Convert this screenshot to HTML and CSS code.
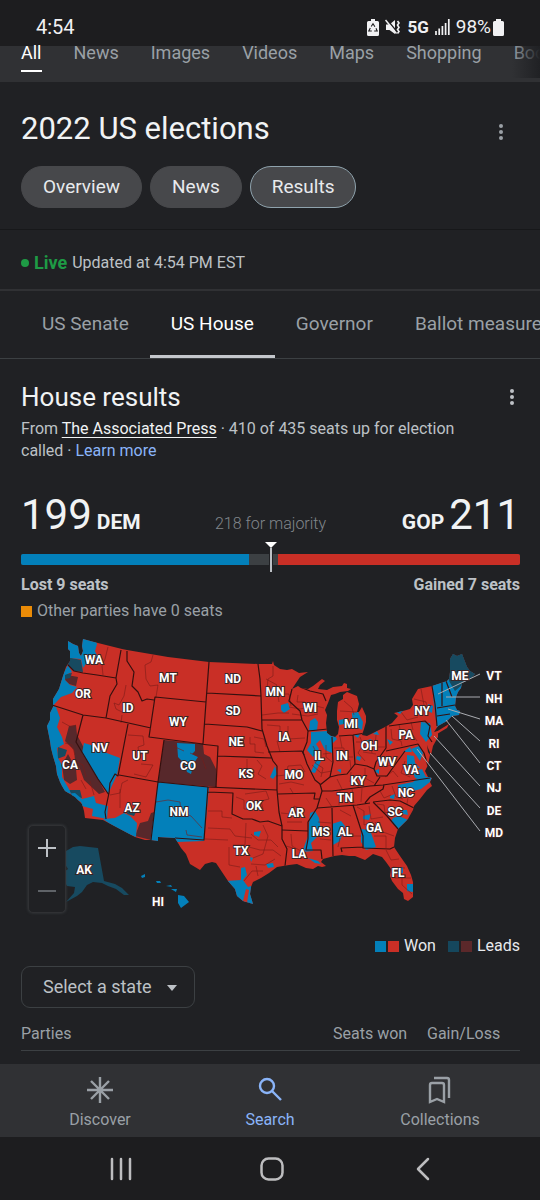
FILE: index.html
```html
<!DOCTYPE html>
<html lang="en">
<head>
    <meta charset="UTF-8">
    <meta name="viewport" content="width=device-width, initial-scale=1.0">
    <link rel="stylesheet" href="styles.css">
    <title>2022 US elections</title>
</head>
<body>
    <div class="status-bar">
        <span class="clock">4:54</span>
        <div class="status-icons">
            <svg width="12" height="17" viewBox="0 0 12 17"><path fill="#f1f1f3" d="M4 0h4v2h2.500q1.500 0 1.500 1.500v12q0 1.500-1.500 1.500h-9q-1.500 0-1.500-1.500v-12q0-1.500 1.500-1.500h2.500z"/><path d="M4.200 7.500l1.800-2.700 1.900 2.900M9 9.300l1.200 2.700h-3M4.800 12h-3l1.500-3" fill="none" stroke="#1d1d1f" stroke-width="1.100"/></svg>
            <svg width="16" height="17" viewBox="0 0 16 17"><path fill="#f1f1f3" d="M1 5.500h3.500L10 1v14l-5.500-4H1z"/><path d="M1.500 0l11 13.500" stroke="#1d1d1f" stroke-width="1.500"/><path d="M.5 1l11 13.500" fill="none" stroke="#f1f1f3" stroke-width="1.500"/><path d="M12.500 2l1.500 2-1.500 2 1.500 2.500-1.500 2 1.500 2-1.500 2" fill="none" stroke="#f1f1f3" stroke-width="1.600"/></svg>
            <b>5G</b>
            <svg width="15" height="16" viewBox="0 0 15 16"><path d="M1 12v4M4.200 9.500v6.500M7.400 7v9M10.600 4v12M13.800 0v16" stroke="#f1f1f3" stroke-width="1.700"/></svg>
            <span class="percent">98%</span>
            <svg width="11" height="17" viewBox="0 0 11 17"><path fill="#f1f1f3" d="M3 0h5v2h1.500q1.500 0 1.500 1.500v12q0 1.500-1.500 1.500h-8q-1.500 0-1.500-1.500v-12q0-1.500 1.500-1.500h1.500z"/></svg>
        </div>
    </div>

    <nav class="search-nav">
        <a href="#" class="current">All</a>
        <a href="#">News</a>
        <a href="#">Images</a>
        <a href="#">Videos</a>
        <a href="#">Maps</a>
        <a href="#">Shopping</a>
        <a href="#">Books</a>
    </nav>

    <main>
        <header class="page-header">
            <div class="title-row">
                <h1>2022 US elections</h1>
                <button class="more more-inset" aria-label="More options">
                    <svg width="6" height="18" viewBox="0 0 6 18"><circle cx="3" cy="3" r="2"/><circle cx="3" cy="9" r="2"/><circle cx="3" cy="15" r="2"/></svg>
                </button>
            </div>
            <div class="chips">
                <button class="chip">Overview</button>
                <button class="chip">News</button>
                <button class="chip selected">Results</button>
            </div>
        </header>

        <p class="live"><span class="live-dot"></span><b>Live</b> <span>Updated at 4:54 PM EST</span></p>

        <nav class="race-tabs">
            <a href="#">US Senate</a>
            <a href="#" class="current">US House</a>
            <a href="#">Governor</a>
            <a href="#">Ballot measures</a>
        </nav>

        <section class="results">
            <div class="title-row">
                <h2>House results</h2>
                <button class="more" aria-label="More about these results">
                    <svg width="6" height="18" viewBox="0 0 6 18"><circle cx="3" cy="3" r="2"/><circle cx="3" cy="9" r="2"/><circle cx="3" cy="15" r="2"/></svg>
                </button>
            </div>
            <p class="source">From <a href="#" class="press">The Associated Press</a> · 410 of 435 seats up for election called · <a href="#">Learn more</a></p>

            <div class="score">
                <div class="party"><span class="count">199</span><b>DEM</b></div>
                <span class="majority">218 for majority</span>
                <div class="party party-right"><b>GOP</b><span class="count">211</span></div>
            </div>
            <div class="seat-bar">
                <div class="dem" style="width: 45.7%"></div>
                <div class="gop" style="width: 48.5%"></div>
                <svg class="marker" width="14" height="30" viewBox="0 0 14 30"><path d="M1 0h12L7 6z" fill="#fff"/><path d="M7 7v23" stroke="#202124" stroke-width="4"/><path d="M7 6v24" stroke="#bdc1c6" stroke-width="2"/></svg>
            </div>
            <div class="change"><b>Lost 9 seats</b><b>Gained 7 seats</b></div>
            <p class="others"><span class="swatch orange"></span>Other parties have 0 seats</p>
        </section>

        <div class="map">
            <svg class="us-map" viewBox="0 0 540 290" role="img" aria-label="House results by state">
                <defs>
                    <path id="usa" d="M68 12L73 15L78 17L79 24L81 27L83 22L82 17L83 10L94 13L122 20L127 21L168 28L209 33L258 35L272 35L273 32L274 36L280 40L287 41L292 40L299 44L308 43L300 48L292 60L298 57L301 59L308 60L313 57L322 50L325 52L320 56L318 60L327 61L333 58L342 57L344 54L347 55L347 59L351 60L348 62L340 63L335 65L331 66L328 74L325 81L327 86L326 94L327 104L331 107L335 108L338 105L339 98L337 91L337 82L338 73L343 70L343 66L347 63L352 65L357 67L359 75L357 83L359 83L362 78L366 87L366 93L364 100L362 106L367 107L375 103L385 98L392 94L398 87L394 84L403 82L410 80L413 76L412 70L418 60L432 57L447 52L449 50L450 43L450 30L453 25L457 27L462 25L467 38L470 42L475 45L469 51L462 54L461 59L458 63L456 68L455 77L457 81L460 82L459 86L452 87L447 92L438 97L434 103L438 102L438 108L433 117L431 126L428 119L427 116L428 123L430 126L428 136L425 142L428 148L432 149L430 153L432 157L427 161L420 170L414 177L413 181L408 190L398 200L395 209L394 218L400 227L407 237L411 246L413 253L413 268L408 272L404 270L403 264L398 260L392 252L390 247L391 240L386 233L382 228L373 225L365 231L355 227L349 227L342 226L334 227L323 230L321 233L326 237L322 238L318 237L313 240L306 239L297 235L289 236L277 238L269 244L261 249L253 253L251 258L250 265L253 275L243 272L237 267L235 260L228 252L220 240L216 234L212 233L205 235L200 241L190 235L186 225L181 219L175 209L158 208L158 212L151 211L145 211L135 208L103 191L85 189L84 182L82 175L75 168L65 162L62 157L60 153L57 145L56 137L53 127L51 119L50 112L47 97L50 91L50 84L53 78L53 70L59 60L63 47L66 38L70 32L70 22L68 20Z"/>
                    <clipPath id="land"><use href="#usa"/></clipPath>
                </defs>
                <use href="#usa" class="won-gop"/>
                <g clip-path="url(#land)">
                    <!-- leading, not called -->
                    <path class="lead-gop" d="M67 46L78 48L76 57L69 55L65 51ZM69 97L76 96L77 106L84 119L98 150L105 163L99 165L84 151L80 140L75 132L74 121L65 112ZM62 136L68 125L76 140L77 151L70 155L64 151ZM164 111L203 115L204 125L210 128L216 140L216 158L158 153ZM151 184L148 192L140 194L135 207L151 211L158 182Z"/>
                    <path class="lead-dem" d="M67 28L81 31L83 43L74 42L68 36ZM65 45L72 44L70 49L65 50ZM58 118L67 121L65 127L57 130ZM69 161L80 161L82 169L72 167ZM128 181L136 183L134 187L127 185ZM450 20L464 20L478 45L462 56L455 62L449 52Z"/>
                    <!-- called for Democrats -->
                    <path class="won-dem" d="M64 8L95 10L97 15L95 22L98 29L90 29L83 39L81 30L70 29ZM68 36L72 43L65 46L65 51L70 56L77 58L72 64L61 68L50 80L45 78Z"/>
                    <path class="won-dem" d="M45 75L56 78L60 89L57 98L62 108L64 115L57 119L58 129L62 136L62 148L69 160L73 169L81 173L82 177L93 180L92 187L107 190L108 177L96 174L94 167L82 170L75 164L65 165L50 145L40 90Z"/>
                    <path class="won-dem" d="M84 114L94 117L104 123L120 129L117 146L108 165L98 150L82 124ZM103 190L115 189L124 184L130 187L137 194L136 208L120 202Z"/>
                    <path class="won-dem" d="M158 153L209 158L204 212L150 214ZM177 114L195 115L195 122L192 125L198 128L194 134L191 145L187 143L184 134L178 128Z"/>
                    <path class="won-dem" d="M281 76L288 74L290 80L284 84L281 81ZM275 137L277 145L273 150L270 148ZM310 92L315 89L318 93L317 101L309 101ZM311 103L327 102L332 108L332 124L325 121L320 111L316 115L319 120L313 128L307 121L311 114ZM316 131L321 132L315 144L311 143ZM352 84L358 83L363 93L362 101L357 98L353 98ZM339 91L344 90L344 95L339 96ZM337 141L341 140L341 144ZM354 106L360 105L358 109ZM357 127L361 128L360 132L356 130ZM365 112L371 110L373 114L369 117ZM373 105L377 102L379 106ZM327 108L334 106L337 110L333 114Z"/>
                    <path class="won-dem" d="M310 184L315 182L319 189L321 202L316 209L311 214L313 222L302 223L308 207ZM332 195L341 192L345 197L340 212L333 216ZM361 200L370 201L376 218L366 221L361 213ZM308 229L318 232L321 235L315 234ZM363 187L371 185L369 191L363 190ZM393 189L399 187L408 191L398 200L391 193ZM401 181L407 181L408 186L403 185Z"/>
                    <path class="won-dem" d="M398 156L413 153L418 148L432 148L430 153L421 160L413 162L398 162ZM390 167L395 165L394 170L390 169ZM407 126L414 127L415 134L420 139L413 139L407 137ZM411 120L419 117L423 124L420 132L416 126ZM413 143L422 140L426 148L415 149ZM374 142L379 140L379 145Z"/>
                    <path class="won-dem" d="M432 57L449 48L462 54L465 80L460 92L437 99L434 76ZM428 75L433 77L432 84L428 82ZM421 93L430 94L432 106L426 113L420 105ZM395 82L404 81L400 85ZM387 110L393 113L390 116ZM403 123L412 123L410 118ZM416 81L419 80L419 84Z"/>
                    <path class="won-dem" d="M241 239L245 238L247 246L243 251L248 258L251 257L254 276L234 272L226 252L241 251ZM254 203L261 202L259 208L254 206ZM250 228L253 229L251 233ZM266 235L273 234L274 238L268 239ZM398 239L403 238L403 244L399 245ZM407 255L413 255L413 263L407 262Z"/>
                    <path class="won-gop" d="M246 260L249 261L247 274L243 272Z"/>
                    <path class="lead-dem" d="M449 24L464 20L478 45L462 56L455 62L449 52Z"/>
                    <!-- district lines -->
                    <path class="districts" d="M108 18L105 30L102 37L103 46M153 26L151 33L145 36L146 50L150 57L158 56L156 68M126 56L124 67L119 76L114 74L116 80L122 83M122 86L121 94M128 106L143 107L144 116L138 118L139 125L148 124M141 135L153 136L146 148L134 145M81 151L86 160M110 166L120 164L122 154L128 151M120 160L120 179M156 173L168 171L180 173L181 183L191 187L202 199M186 201L187 206L202 208M273 37L273 47L268 50L267 60M266 50L277 56L273 63L278 67L279 73M262 86L278 84L289 84M273 65L289 65L291 77M298 66L297 73L305 73L306 85M289 78L300 80L316 77L324 79M292 85L308 87L318 85M267 96L280 97L280 107L288 107L288 97M283 111L277 112L280 123M288 110L305 109M250 108L250 115L255 115L255 123L264 124M254 108L264 110L266 118"/>
                    <path class="districts" d="M247 130L247 140L253 141L252 150M257 131L262 137L258 145L266 150M276 147L286 146L288 137L301 136L305 143M279 155L291 153L304 156M290 159L293 164M208 182L222 182L222 188L232 189M205 210L228 211M208 199L230 200L235 207L252 209M246 194L245 216L233 216M251 205L258 211L271 211L278 218M263 196L268 207L263 225L253 229M229 218L229 236L240 238M249 218L260 221L273 221L281 227M251 235L265 236L275 230M244 252L252 242L263 242M258 247L256 237M245 165L266 162L269 170L261 172L263 180M236 168L244 171L244 180L253 181M281 184L291 185L294 177L305 181M287 193L302 193M291 205L292 217L301 222M286 217L293 219M292 229L304 229M313 117L319 129L315 134L323 139L321 148M326 116L326 128L332 133M323 125L331 124M312 136L321 144L332 142M334 119L344 119L344 128L353 128M337 132L350 131L351 141M340 108L342 119M340 82L357 83M344 72L352 79L354 86"/>
                    <path class="districts" d="M356 113L369 113L372 124M360 108L363 116L358 124L365 132M376 106L375 118L385 118M363 123L376 125M337 150L342 160M351 143L350 153L359 158M365 139L365 149L374 154M326 169L332 178M340 161L339 176M352 160L354 174M362 159L361 173M318 193L331 194M320 210L331 211M340 181L351 187M340 207L361 207M338 218L340 209M357 178L364 182L364 196L373 193M369 177L371 190L383 188M375 193L383 203L394 207M374 207L386 207L386 219M377 175L384 176L385 184L393 181M390 178L400 179M380 162L384 169L391 166M392 157L396 168L403 170M409 162L407 175M385 148L393 142L398 148M405 132L401 144L410 148M391 100L392 110L401 112L402 117M399 95L401 106L413 106L417 112M411 93L413 101M401 83L407 91L418 88M414 70L426 73L428 83M421 60L424 76L416 84M381 130L386 137L394 136M386 221L391 231L399 230M393 238L405 239M395 249L411 249M402 247L402 256L412 265M173 117L184 122M190 124L202 129L206 140M62 93L71 98L76 96M65 114L72 116L75 126M77 133L83 136L86 148M90 152L94 166"/>
                    <path class="borders" d="M68 36L74 42L83 44L97 46L116 49M121 21L116 49L117 55L110 67L106 89M52 76L83 86L106 89L151 99M127 22L127 32L134 43L132 57L138 63L142 72L147 70L154 71M209 33L206 73L203 115M206 73L155 68L149 108L203 115M164 111L158 153L151 211M128 95L118 147L115 145L110 154L109 164L105 183L106 190M119 146L158 153L208 158L277 161M83 86L76 113L98 150L109 166M207 64L261 67M258 35L260 50L261 67L262 100L267 117L273 132L277 137L277 161L279 183L282 197L282 210L287 220L285 237M205 95L247 98L262 102M200 115L218 117L216 158M217 127L272 129M262 91L302 91M292 60L289 72L300 82L302 91L308 102L307 113L303 123L307 135L310 141L315 151L320 155L322 162L317 179L308 193L308 210L306 221L321 221L322 230"/>
                    <path class="borders" d="M308 102L328 100M268 123L302 122L304 126M300 58L310 62L323 65L326 72M332 108L333 133L330 148L320 156M330 148L338 146L347 145L355 135L367 137L374 140L376 133L386 119L386 97M353 106L355 135M339 107L353 106L365 104M374 140L377 147L387 147L397 133L405 122M386 122L418 115L424 124L428 137M389 97L425 92L430 97L428 107L432 113M432 57L435 75L437 97M442 53L442 77M437 79L455 76M437 87L450 85M446 52L452 68M322 162L332 162L370 157L383 156L430 149M317 179L357 176L370 174M365 174L370 168L383 160L384 156M374 157L380 148M373 173L390 171L400 172L414 179M373 173L387 187L398 200M353 176L363 207L363 219L390 220L394 218M332 179L333 227M342 223L341 219L363 218M282 201L308 202M278 165L315 164L314 170L319 170M208 158L204 211L175 209M208 163L233 164L232 185L243 190L252 190L260 193L268 192L282 197"/>
                </g>
                <path class="won-gop" d="M436 103L449 95L447 99L437 105Z"/>
                <path class="lead-dem" d="M58 224L66 222L73 218L80 217L98 219L104 252L115 255L122 259L129 266L124 266L116 260L108 257L102 254L93 253L87 256L82 263L77 267L66 273L74 264L75 258L67 257L61 245L68 240Z"/>
                <path class="won-dem" d="M141 247L145 245L145 248L142 249ZM156 252L160 252L161 254L157 254ZM166 257L171 256L172 258ZM171 260L177 260L176 263ZM178 266L184 267L189 273L181 279L178 274Z"/>
                <path class="leaders" d="M480 45L438 65M480 68L446 68M480 90L448 80M480 112L452 87M480 134L446 91M480 157L434 107M480 179L430 124M480 202L417 120"/>
                <g class="state-names">
                    <text x="94" y="35">WA</text><text x="168" y="53">MT</text><text x="83" y="69">OR</text>
                    <text x="128" y="83">ID</text><text x="178" y="97">WY</text><text x="100" y="123">NV</text>
                    <text x="140" y="131">UT</text><text x="70" y="140">CA</text><text x="188" y="141">CO</text>
                    <text x="132" y="183">AZ</text><text x="179" y="187">NM</text><text x="233" y="54">ND</text>
                    <text x="233" y="86">SD</text><text x="236" y="117">NE</text><text x="246" y="149">KS</text>
                    <text x="275" y="67">MN</text><text x="284" y="112">IA</text><text x="310" y="83">WI</text>
                    <text x="351" y="99">MI</text><text x="319" y="131">IL</text><text x="342" y="131">IN</text>
                    <text x="369" y="121">OH</text><text x="294" y="150">MO</text><text x="254" y="181">OK</text>
                    <text x="296" y="188">AR</text><text x="241" y="226">TX</text><text x="299" y="229">LA</text>
                    <text x="321" y="207">MS</text><text x="345" y="207">AL</text><text x="345" y="173">TN</text>
                    <text x="358" y="156">KY</text><text x="374" y="203">GA</text><text x="395" y="187">SC</text>
                    <text x="406" y="168">NC</text><text x="411" y="145">VA</text><text x="387" y="137">WV</text>
                    <text x="406" y="110">PA</text><text x="422" y="86">NY</text><text x="398" y="248">FL</text>
                    <text x="460" y="51">ME</text><text x="494" y="51">VT</text><text x="494" y="74">NH</text>
                    <text x="494" y="96">MA</text><text x="494" y="119">RI</text><text x="494" y="141">CT</text>
                    <text x="494" y="163">NJ</text><text x="494" y="186">DE</text><text x="494" y="208">MD</text>
                    <text x="84" y="245">AK</text><text x="158" y="277">HI</text>
                </g>
            </svg>
            <div class="zoom">
                <button aria-label="Zoom in"><svg width="20" height="20" viewBox="0 0 20 20"><path d="M10 1v18M1 10h18" stroke="#bdc1c6" stroke-width="2"/></svg></button>
                <button aria-label="Zoom out"><svg width="20" height="20" viewBox="0 0 20 20"><path d="M1 10h18" stroke="#5f6368" stroke-width="2"/></svg></button>
            </div>
        </div>

        <section class="breakdown">
            <div class="legend">
                <span class="swatch blue"></span><span class="swatch red"></span><span>Won</span>
                <span class="swatch blue-lead"></span><span class="swatch red-lead"></span><span>Leads</span>
            </div>
            <div class="state-picker">
                <select aria-label="Select a state">
                    <option>Select a state</option>
                    <option>Alabama</option>
                    <option>Alaska</option>
                    <option>Arizona</option>
                </select>
                <svg class="caret" width="10" height="6" viewBox="0 0 10 6"><path d="M0 0h10L5 6z" fill="#bdc1c6"/></svg>
            </div>
            <table class="parties">
                <thead>
                    <tr><th>Parties</th><th class="seats">Seats won</th><th class="gain">Gain/Loss</th></tr>
                </thead>
            </table>
        </section>
    </main>

    <nav class="app-nav">
        <a href="#">
            <svg width="28" height="28" viewBox="0 0 28 28"><path d="M14 1v26M1 14h26M5 5l18 18M23 5L5 23"/></svg>
            Discover
        </a>
        <a href="#" class="current">
            <svg width="28" height="28" viewBox="0 0 28 28"><circle cx="11" cy="10" r="7"/><path d="M16 15l9 9"/></svg>
            Search
        </a>
        <a href="#">
            <svg width="28" height="28" viewBox="0 0 28 28"><path d="M4 26V9q0-2 2-2h10q2 0 2 2v17l-7-3zM8 2h13q2 0 2 2v18"/></svg>
            Collections
        </a>
    </nav>
    <div class="system-nav">
        <button aria-label="Recent apps"><svg width="24" height="24" viewBox="0 0 24 24"><path d="M3 2v20M12 2v20M21 2v20"/></svg></button>
        <button aria-label="Home"><svg width="24" height="24" viewBox="0 0 24 24"><rect x="1.500" y="1.500" width="21" height="21" rx="7"/></svg></button>
        <button aria-label="Back"><svg width="24" height="24" viewBox="0 0 24 24"><path d="M17 2L7 12l10 10"/></svg></button>
    </div>
</body>
</html>
```
FILE: styles.css
```css
* {
    margin: 0;
    padding: 0;
    box-sizing: border-box;
}

body {
    font-family: Roboto, "Liberation Sans", sans-serif;
    font-size: 16px;
    line-height: 22px;
    background-color: #202124;
    color: #bdc1c6;
    display: flex;
    flex-direction: column;
    min-height: 100vh;
    overflow-x: hidden;
}

a {
    color: inherit;
    text-decoration: none;
}

button,
select {
    font: inherit;
    color: inherit;
    background: none;
    border: none;
    cursor: pointer;
}

svg {
    display: block;
    flex-shrink: 0;
}

/* Phone status bar */
.status-bar {
    height: 46px;
    padding: 8px 36px 0;
    display: flex;
    align-items: center;
    justify-content: space-between;
    background-color: #1d1d1f;
    color: #f1f1f3;
    font-size: 20px;
}

.status-icons {
    display: flex;
    align-items: center;
    gap: 6px;
}

.status-icons b {
    font-size: 17px;
}

.percent {
    font-size: 19px;
    margin-right: -4px;
}

/* Search type tabs */
.search-nav {
    position: relative;
    height: 36px;
    padding: 0 21px;
    display: flex;
    gap: 32px;
    overflow-x: clip;
    white-space: nowrap;
    background-color: #303134;
    color: #9aa0a6;
    font-size: 18px;
    line-height: 14px;
}

.search-nav a {
    height: 26px;
}

.search-nav .current {
    color: #fff;
    border-bottom: 2px solid #fff;
}

.search-nav::after {
    content: "";
    position: absolute;
    top: 0;
    right: 0;
    width: 28px;
    height: 32px;
    background: linear-gradient(to right, rgba(32, 33, 36, 0), #202124);
}

/* Title and chips */
.page-header {
    padding: 29px 21px 21px;
    border-bottom: 1px solid #17181a;
}

.title-row {
    display: flex;
    align-items: center;
    justify-content: space-between;
}

h1,
h2 {
    font-weight: 400;
    color: #f1f3f4;
}

h1 {
    font-size: 31px;
    line-height: 36px;
}

h2 {
    font-size: 26px;
    line-height: 32px;
}

.more {
    width: 16px;
    display: flex;
    justify-content: center;
    fill: #bdc1c6;
}

.more-inset {
    margin-right: 10px;
    padding-top: 6px;
    fill: #9aa0a6;
}

.chips {
    display: flex;
    gap: 8px;
    margin-top: 19px;
}

.chip {
    height: 42px;
    padding: 0 21px;
    border: 1px solid #47484b;
    border-radius: 21px;
    background-color: #47484b;
    color: #e8eaed;
    font-size: 19px;
}

.chip.selected {
    border-color: #8fa3ad;
}

.live {
    display: flex;
    align-items: center;
    gap: 5px;
    padding: 22px 21px 15px;
    border-bottom: 2px solid #303134;
}

.live b {
    color: #1e9b45;
    font-size: 18px;
}

.live-dot {
    width: 8px;
    height: 8px;
    border-radius: 50%;
    background-color: #1e9b45;
}

/* Race tabs */
.race-tabs {
    display: flex;
    height: 68px;
    padding-left: 21px;
    overflow-x: clip;
    white-space: nowrap;
    border-bottom: 1px solid #3c4043;
    color: #9aa0a6;
    font-size: 19px;
    line-height: 66px;
}

.race-tabs a {
    padding: 0 21px;
}

.race-tabs .current {
    color: #fff;
    border-bottom: 3px solid #c4c7cc;
}

/* Seat totals */
.results {
    padding: 22px 20px 0 21px;
}

.source {
    margin-top: 5px;
    padding-right: 32px;
}

.source a {
    color: #8ab4f8;
}

.source .press {
    color: #f1f3f4;
    text-decoration: underline;
    text-underline-offset: 3px;
}

.score {
    display: grid;
    grid-template-columns: 1fr auto 1fr;
    align-items: baseline;
    margin-top: 29px;
    line-height: 48px;
    color: #f1f3f4;
}

.party {
    display: flex;
    align-items: baseline;
    gap: 5px;
}

.party-right {
    justify-content: flex-end;
}

.party b {
    font-size: 21px;
}

.count {
    font-size: 42px;
}

.majority {
    color: #80868b;
    font-weight: 300;
}

.seat-bar {
    position: relative;
    display: flex;
    justify-content: space-between;
    height: 11px;
    margin-top: 6px;
    border-radius: 2px;
    background-color: #3c4043;
}

.dem {
    background-color: #0380ba;
    border-radius: 2px 0 0 2px;
}

.gop {
    background-color: #c92f26;
    border-radius: 0 2px 2px 0;
}

.marker {
    position: absolute;
    top: -12px;
    left: 50%;
    transform: translateX(-50%);
}

.change {
    display: flex;
    justify-content: space-between;
    margin-top: 9px;
}

.others {
    display: flex;
    align-items: center;
    gap: 5px;
    margin-top: 4px;
    color: #9aa0a6;
}

.swatch {
    width: 11px;
    height: 11px;
}

.orange { background-color: #ea8b07; }
.blue { background-color: #0380ba; }
.red { background-color: #c92f26; }
.blue-lead { background-color: #15475d; }
.red-lead { background-color: #5b282a; }

/* Map */
.map {
    position: relative;
    margin-top: 7px;
}

.us-map {
    width: 100%;
    height: auto;
}

.won-dem { fill: #0380ba; }
.won-gop { fill: #c92f26; }
.lead-dem { fill: #174a60; }
.lead-gop { fill: #57282b; }

.borders {
    fill: none;
    stroke: #35100f;
    stroke-width: 1.2;
    stroke-linejoin: round;
}

.districts {
    fill: none;
    stroke: #7a1d1a;
    stroke-width: 0.6;
}

.leaders {
    stroke: #a9abb0;
    stroke-width: 1;
}

.state-names {
    fill: #fff;
    stroke: #3a2526;
    stroke-width: 2;
    paint-order: stroke;
    font-size: 12px;
    font-weight: 700;
    text-anchor: middle;
}

.zoom {
    position: absolute;
    left: 28px;
    bottom: 6px;
    width: 38px;
    border: 1px solid #303134;
    border-radius: 5px;
    background-color: #202124;
    box-shadow: 0 0 3px #3c4043;
}

.zoom button {
    display: flex;
    align-items: center;
    justify-content: center;
    width: 100%;
    height: 43px;
}

/* Legend, state picker and table */
.breakdown {
    padding: 16px 20px 11px 21px;
}

.legend {
    display: flex;
    align-items: center;
    justify-content: flex-end;
    gap: 2px;
    color: #e8eaed;
}

.legend span:not(.swatch) {
    margin-left: 3px;
}

.legend .blue-lead {
    margin-left: 10px;
}

.state-picker {
    position: relative;
    width: max-content;
    margin-top: 9px;
}

.state-picker select {
    appearance: none;
    height: 42px;
    padding: 0 42px 0 21px;
    border: 1px solid #3c4043;
    border-radius: 9px;
    font-size: 18px;
}

.caret {
    position: absolute;
    right: 18px;
    top: 19px;
    pointer-events: none;
}

.parties {
    width: 100%;
    margin-top: 15px;
    border-collapse: collapse;
    color: #9aa0a6;
}

.parties th {
    padding-bottom: 5px;
    border-bottom: 1px solid #3c4043;
    font-weight: 400;
    text-align: left;
}

.parties .seats {
    width: 94px;
}

.parties .gain {
    width: 93px;
}

/* App and system navigation */
.app-nav {
    display: grid;
    grid-template-columns: 200px 1fr 200px;
    height: 73px;
    margin-top: auto;
    padding-top: 12px;
    background-color: #303134;
    color: #9aa0a6;
}

.app-nav a {
    display: flex;
    flex-direction: column;
    align-items: center;
    gap: 5px;
}

.app-nav svg {
    fill: none;
    stroke: currentColor;
    stroke-width: 2.4;
}

.app-nav .current {
    color: #8ab4f8;
}

.system-nav {
    display: flex;
    justify-content: space-around;
    align-items: center;
    height: 63px;
    padding: 0 42px 0 46px;
    background-color: #1d1d1f;
}

.system-nav svg {
    fill: none;
    stroke: #bdbdbf;
    stroke-width: 2.5;
    stroke-linecap: round;
    stroke-linejoin: round;
}
```
